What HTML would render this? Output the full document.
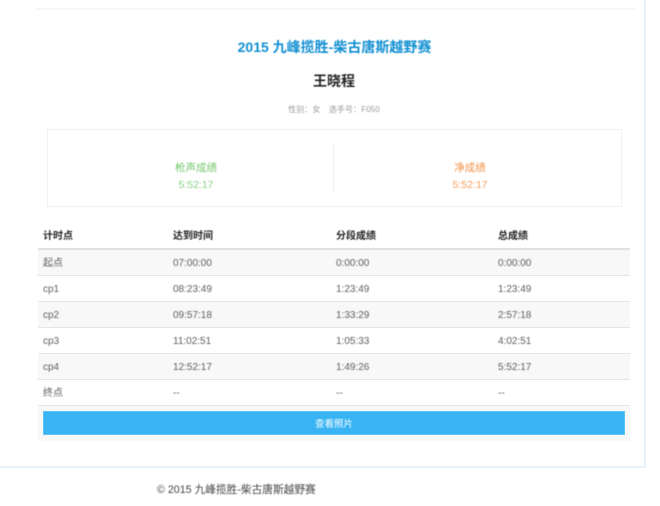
<!DOCTYPE html>
<html lang="zh">
<head>
<meta charset="utf-8">
<title>2015 九峰揽胜-柴古唐斯越野赛</title>
<style>
html,body{margin:0;padding:0;width:660px;height:506px;overflow:hidden;background:#fff}
body{position:relative;font-family:"Liberation Sans","Noto Sans CJK SC",sans-serif;color:#666}
div{position:absolute;box-sizing:border-box}
.t{white-space:nowrap;filter:blur(.4px)}
.c{text-align:center}
.line{left:38px;width:592px;height:1px;background:#e6e6e6}
.g{left:38px;width:592px;height:25px;background:#f8f8f8}
.h{font-size:10px;font-weight:bold;color:#222;top:230px;line-height:14px}
.r{font-size:10px;line-height:14px;color:#5e5e5e}
.a{left:43px}.b{left:173px}.d{left:336px}.e{left:498px}
</style>
</head>
<body>
<div style="left:0;top:0;width:646px;height:468px;background:#fff;border-right:2px solid #e6f1fa;border-bottom:2px solid #e6f1fa"></div>
<div style="left:35px;top:8px;width:600px;height:2px;background:#f7f7f7"></div>

<div class="t c" style="left:0;width:669px;top:38px;font-size:14px;line-height:18px;font-weight:bold;color:#108fd2">2015 九峰揽胜-柴古唐斯越野赛</div>
<div class="t c" style="left:0;width:668px;top:72px;font-size:14px;line-height:18px;font-weight:bold;color:#222">王晓程</div>
<div class="t c" style="left:0;width:668px;top:104px;font-size:8px;line-height:12px;color:#999;word-spacing:6px;letter-spacing:.1px">性别：女 选手号：F050</div>

<div style="left:47px;top:129px;width:575px;height:78px;border:1px solid #f1f1f1"></div>
<div style="left:333px;top:143px;width:1px;height:50px;background:#f1f1f1"></div>
<div class="t c" style="left:48px;width:296px;top:160px;font-size:10.5px;line-height:16px;color:#74c86c">枪声成绩</div>
<div class="t c" style="left:48px;width:296px;top:177px;font-size:10.5px;line-height:16px;color:#8ad083">5:52:17</div>
<div class="t c" style="left:322px;width:296px;top:160px;font-size:10.5px;line-height:16px;color:#f2924a">净成绩</div>
<div class="t c" style="left:322px;width:296px;top:177px;font-size:10.5px;line-height:16px;color:#f49c5c">5:52:17</div>

<div class="t h a">计时点</div><div class="t h b">达到时间</div><div class="t h d">分段成绩</div><div class="t h e">总成绩</div>
<div style="left:38px;top:248px;width:592px;height:2px;background:#e2e2e2"></div>

<div class="g" style="top:250px"></div>
<div class="g" style="top:302px"></div>
<div class="g" style="top:354px"></div>
<div class="line" style="top:275px"></div>
<div class="line" style="top:301px"></div>
<div class="line" style="top:327px"></div>
<div class="line" style="top:353px"></div>
<div class="line" style="top:379px"></div>
<div class="line" style="top:405px"></div>

<div class="t r a" style="top:255px;margin-top:2px">起点</div><div class="t r b" style="top:257px">07:00:00</div><div class="t r d" style="top:257px">0:00:00</div><div class="t r e" style="top:257px">0:00:00</div>
<div class="t r a" style="top:283px">cp1</div><div class="t r b" style="top:283px">08:23:49</div><div class="t r d" style="top:283px">1:23:49</div><div class="t r e" style="top:283px">1:23:49</div>
<div class="t r a" style="top:309px">cp2</div><div class="t r b" style="top:309px">09:57:18</div><div class="t r d" style="top:309px">1:33:29</div><div class="t r e" style="top:309px">2:57:18</div>
<div class="t r a" style="top:335px">cp3</div><div class="t r b" style="top:335px">11:02:51</div><div class="t r d" style="top:335px">1:05:33</div><div class="t r e" style="top:335px">4:02:51</div>
<div class="t r a" style="top:361px">cp4</div><div class="t r b" style="top:361px">12:52:17</div><div class="t r d" style="top:361px">1:49:26</div><div class="t r e" style="top:361px">5:52:17</div>
<div class="t r a" style="top:387px">终点</div><div class="t r b" style="top:387px">--</div><div class="t r d" style="top:387px">--</div><div class="t r e" style="top:387px">--</div>

<div style="left:38px;top:406px;width:592px;height:35px;background:#f8f8f8"></div>
<div style="left:43px;top:411px;width:582px;height:24px;background:#38b4f4;border:1px solid #5cc3f6"></div>
<div class="t c" style="left:43px;top:418px;width:582px;font-size:9.5px;line-height:14px;color:#fff">查看照片</div>

<div class="t" style="left:157px;top:482px;font-size:10.7px;line-height:16px;color:#444">© 2015 九峰揽胜-柴古唐斯越野赛</div>
</body>
</html>
